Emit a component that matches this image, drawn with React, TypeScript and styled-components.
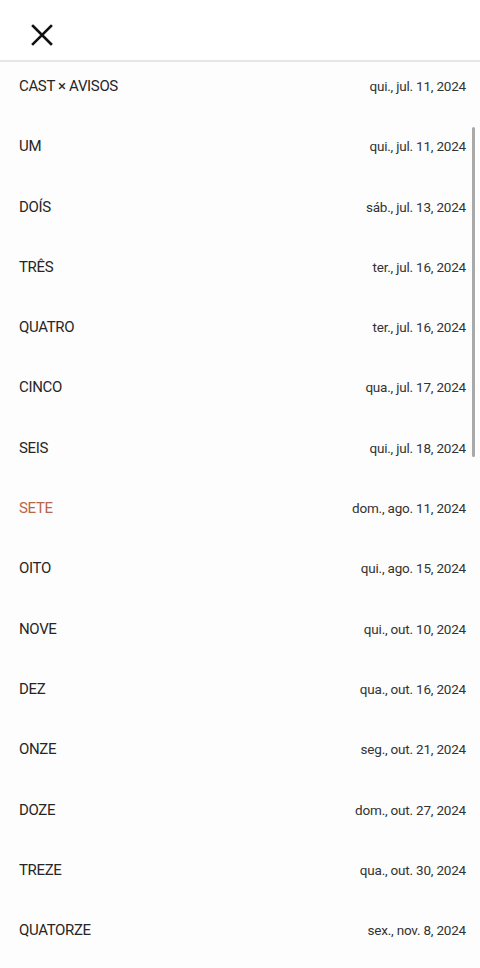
import React from 'react';
import styled, { createGlobalStyle } from 'styled-components';

const GlobalStyle = createGlobalStyle`
	html, body {
		margin: 0;
		padding: 0;
		background: #fdfdfd;
	}
	body {
		font-family: Roboto, "Noto Sans", sans-serif;
	}
`;

interface IEpisode {
	title: string;
	date: string;
	active?: boolean;
}

const episodes: IEpisode[] = [
	{ title: 'CAST × AVISOS', date: 'qui., jul. 11, 2024' },
	{ title: 'UM', date: 'qui., jul. 11, 2024' },
	{ title: 'DOÍS', date: 'sáb., jul. 13, 2024' },
	{ title: 'TRÊS', date: 'ter., jul. 16, 2024' },
	{ title: 'QUATRO', date: 'ter., jul. 16, 2024' },
	{ title: 'CINCO', date: 'qua., jul. 17, 2024' },
	{ title: 'SEIS', date: 'qui., jul. 18, 2024' },
	{ title: 'SETE', date: 'dom., ago. 11, 2024', active: true },
	{ title: 'OITO', date: 'qui., ago. 15, 2024' },
	{ title: 'NOVE', date: 'qui., out. 10, 2024' },
	{ title: 'DEZ', date: 'qua., out. 16, 2024' },
	{ title: 'ONZE', date: 'seg., out. 21, 2024' },
	{ title: 'DOZE', date: 'dom., out. 27, 2024' },
	{ title: 'TREZE', date: 'qua., out. 30, 2024' },
	{ title: 'QUATORZE', date: 'sex., nov. 8, 2024' },
];

const App = () => {
	return (
		<Page>
			<GlobalStyle />
			<Header>
				<CloseButton aria-label="Fechar">
					<svg width="22" height="22" viewBox="0 0 22 22" fill="none" stroke="#111" strokeWidth="2.6" strokeLinecap="square">
						<path d="M2 2L20 20M20 2L2 20" />
					</svg>
				</CloseButton>
			</Header>
			<ListWrap>
				<List>
					{episodes.map((ep) => (
						<Row key={ep.title}>
							<Title $active={ep.active}>{ep.title}</Title>
							<DateText>{ep.date}</DateText>
						</Row>
					))}
				</List>
				<Scrollbar />
			</ListWrap>
		</Page>
	);
}

export default App;

const Page = styled.div`
	width: 480px;
	height: 968px;
	overflow: hidden;
	background: #fdfdfd;
`;

const Header = styled.div`
	height: 62px;
	box-sizing: border-box;
	display: flex;
	align-items: center;
	padding: 9px 0 0 31px;
	background: #fff;
	border-bottom: 2px solid #e6e6e6;
`;

const CloseButton = styled.button`
	border: none;
	background: none;
	padding: 0;
	width: 22px;
	height: 22px;
	display: flex;
	cursor: pointer;
`;

const ListWrap = styled.div`
	position: relative;
`;

const List = styled.div`
	display: flex;
	flex-direction: column;
`;

const Row = styled.div`
	height: 60.3px;
	box-sizing: border-box;
	display: flex;
	justify-content: space-between;
	align-items: flex-start;
	padding: 12px 14px 0 19px;
	line-height: 24px;
`;

const Title = styled.span<{ $active?: boolean }>`
	font-size: 15px;
	letter-spacing: -0.35px;
	color: ${(p) => (p.$active ? '#b8664a' : '#262626')};
`;

const DateText = styled.span`
	font-size: 13.5px;
	letter-spacing: -0.2px;
	color: #333;
`;

const Scrollbar = styled.div`
	position: absolute;
	top: 65px;
	right: 5px;
	width: 3px;
	height: 330px;
	border-radius: 2px;
	background: #a9a9a9;
`;
